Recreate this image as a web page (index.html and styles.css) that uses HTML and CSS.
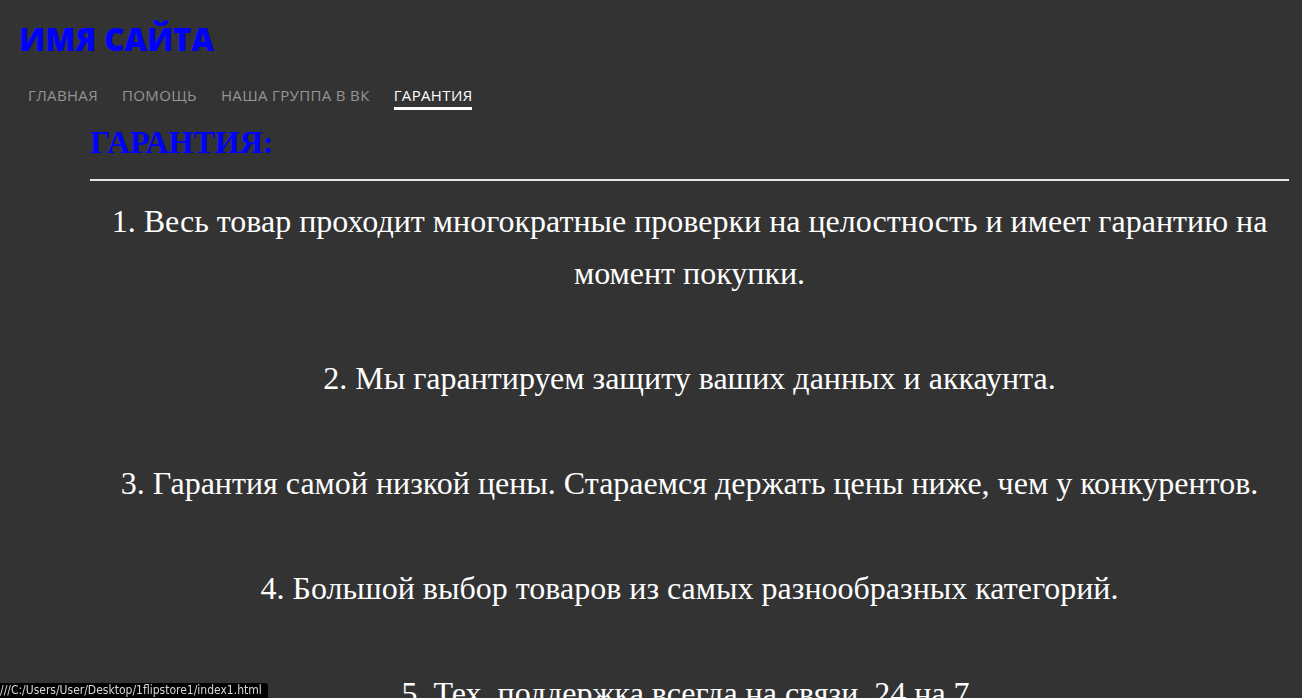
FILE: index.html
```html
<!DOCTYPE html>
<html lang="ru">
<head>
<meta charset="utf-8">
<title>Гарантия</title>
<link rel="stylesheet" href="styles.css">
</head>
<body>
<header class="site-header">
  <div class="logo">ИМЯ САЙТА</div>
  <nav class="nav">
    <a class="nav-link" href="#">Главная</a>
    <a class="nav-link" href="#">Помощь</a>
    <a class="nav-link" href="#">Наша группа в ВК</a>
    <a class="nav-link active" href="#">Гарантия</a>
  </nav>
</header>
<main class="content">
  <h1 class="title">ГАРАНТИЯ:</h1>
  <hr class="divider">
  <div class="list">
    <p class="item">1. Весь товар проходит многократные проверки на целостность и имеет гарантию на момент покупки.</p>
    <p class="item">2. Мы гарантируем защиту ваших данных и аккаунта.</p>
    <p class="item">3. Гарантия самой низкой цены. Стараемся держать цены ниже, чем у конкурентов.</p>
    <p class="item">4. Большой выбор товаров из самых разнообразных категорий.</p>
    <p class="item">5. Тех. поддержка всегда на связи, 24 на 7.</p>
  </div>
</main>
<div class="status">///C:/Users/User/Desktop/1flipstore1/index1.html</div>
</body>
</html>
```
FILE: styles.css
```css
html, body {
  margin: 0;
  padding: 0;
  background: #333333;
  overflow: hidden;
  height: 698px;
}
body {
  font-family: "Liberation Serif", "Times New Roman", serif;
  color: #ffffff;
}
.site-header {
  padding: 20px 0 0 19px;
}
.logo {
  font-family: "Open Sans", "Liberation Sans", sans-serif;
  font-weight: 800;
  font-size: 31px;
  line-height: 38px;
  color: #0000ff;
}
.nav {
  display: flex;
  gap: 24px;
  margin-top: 28px;
  padding-left: 9px;
}
.nav-link {
  font-family: "Open Sans", "Liberation Sans", sans-serif;
  font-size: 15px;
  line-height: 18px;
  letter-spacing: 0.35px;
  text-transform: uppercase;
  color: #959595;
  text-decoration: none;
  padding-bottom: 3px;
  border-bottom: 3px solid transparent;
}
.nav-link.active {
  color: #ffffff;
  border-bottom-color: #ffffff;
}
.content {
  margin: 12px 13px 0 90px;
}
.title {
  margin: 0;
  font-size: 32px;
  line-height: 40px;
  font-weight: bold;
  color: #0000ff;
}
.divider {
  margin: 17px 0 0;
  border: none;
  border-top: 2px solid #e6e6e6;
  height: 0;
}
.list {
  margin-top: 14px;
  text-align: center;
}
.item {
  margin: 0 0 53px;
  font-size: 32px;
  line-height: 52px;
}
.status {
  position: fixed;
  left: 0;
  bottom: 0;
  background: #000;
  color: #d8d8d8;
  font-family: "DejaVu Sans Condensed", "Liberation Sans", sans-serif;
  font-size: 12px;
  line-height: 15px;
  padding: 0 6px 0 0;
  border-top-right-radius: 3px;
  white-space: nowrap;
}
```
